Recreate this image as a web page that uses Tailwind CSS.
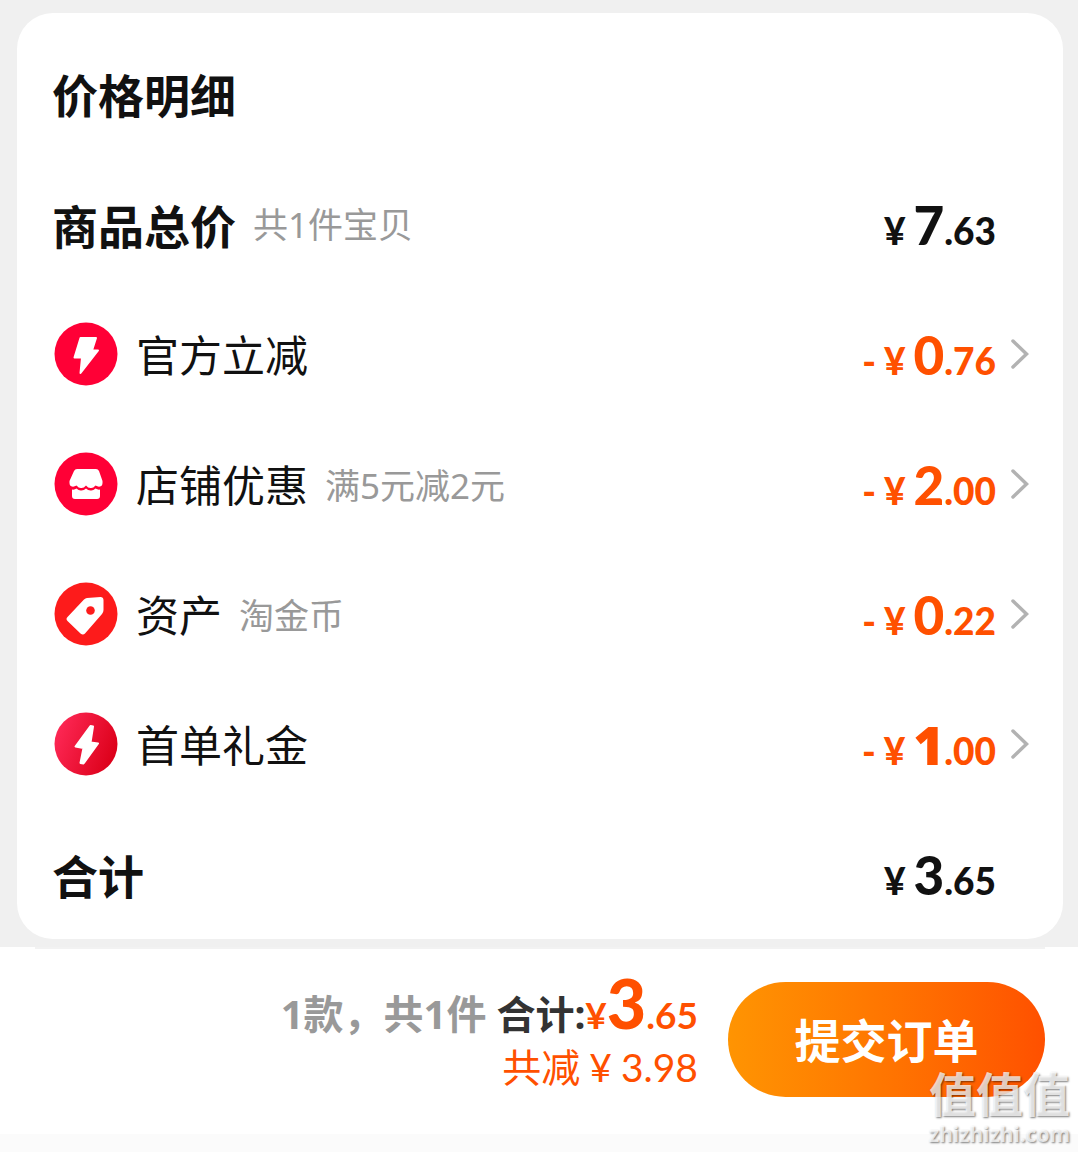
<!DOCTYPE html>
<html lang="zh-CN">
<head>
  <meta charset="UTF-8" />
  <meta name="viewport" content="width=device-width, initial-scale=1.0" />
  <title>价格明细</title>
  <script src="https://cdn.jsdelivr.net/npm/@tailwindcss/browser@4"></script>
</head>
<body class="min-h-screen flex flex-col bg-[#fbfbfb] text-[#111111] font-['Noto_Sans','Noto_Sans_CJK_SC',sans-serif]">
  <main class="bg-[#f0f0f0] pt-[13px] pb-2 pl-[17px] pr-[15px]">
    <section class="bg-white rounded-[36px] pt-4 pl-[35px] pr-[34px]">
      <h1 class="h-[130px] pt-[2px] flex items-center text-[46px] leading-[64px] font-bold">价格明细</h1>

      <div class="h-[130px] flex items-center">
        <h2 class="pt-1 text-[46px] leading-[64px] font-bold">商品总价</h2>
        <span class="ml-[17px] pt-[2px] text-[35px] leading-[64px] text-[#999999]">共1件宝贝</span>
        <p class="ml-auto mr-[33px] pt-2 flex items-baseline font-['Lato',sans-serif] font-black leading-[64px]">
          <span class="text-[37px] mr-2">¥</span><span class="text-[53px]">7</span><span class="text-[37px]">.63</span>
        </p>
      </div>

      <!-- discounts -->
      <button type="button" class="w-full h-[130px] flex items-center text-left">
        <svg class="w-[67px] h-[67px]" viewBox="0 0 67 67" aria-hidden="true">
          <circle cx="34" cy="33" r="31.5" fill="#ff0036" />
          <path d="M28.5 17 H44 L40 29.5 H46 L28.5 52 L30 36.5 H22.5 Z" fill="#fff" stroke="#fff" stroke-width="2" stroke-linejoin="round" />
        </svg>
        <span class="ml-[17px] pt-1 text-[43px] leading-[64px]">官方立减</span>
        <span class="ml-auto pt-2 flex items-baseline font-['Lato',sans-serif] font-black leading-[64px] text-[#ff5000]">
          <span class="text-[37px] mr-2">-</span><span class="text-[37px] mr-2">¥</span><span class="text-[53px]">0</span><span class="text-[37px]">.76</span>
        </span>
        <svg class="ml-[14px] w-[19px] h-8" viewBox="0 0 19 32" fill="none" stroke="#b2b2b2" stroke-width="3.5" stroke-linecap="round" aria-hidden="true"><path d="M3 3 L16.5 16 L3 29" /></svg>
      </button>

      <button type="button" class="w-full h-[130px] flex items-center text-left">
        <svg class="w-[67px] h-[67px]" viewBox="0 0 67 67" aria-hidden="true">
          <circle cx="34" cy="33" r="31.5" fill="#ff0036" />
          <path d="M25 18 H44 Q46 18 47 20 L50.5 30 Q51 35 48 35.5 Q46 36 43.5 34.5 Q41 37.5 38.5 37 Q36 37 34 34.5 Q32 37 29.5 37 Q27 37.5 24.5 34.5 Q22 36 20 35.5 Q17 35 17.5 30 L22 20 Q23 18 25 18 Z" fill="#fff" />
          <path d="M20 38.5 Q22.5 39 24.5 37.5 Q27 40 29.5 39.5 Q32 39.5 34 37.5 Q36 39.5 38.5 39.5 Q41 40 43.5 37.5 Q46 39 48 38.5 V45 Q48 48 45 48 H23 Q20 48 20 45 Z" fill="#fff" />
        </svg>
        <span class="ml-[17px] pt-1 text-[43px] leading-[64px]">店铺优惠</span>
        <span class="ml-[17px] pt-1 text-[35px] leading-[64px] text-[#999999]">满5元减2元</span>
        <span class="ml-auto pt-2 flex items-baseline font-['Lato',sans-serif] font-black leading-[64px] text-[#ff5000]">
          <span class="text-[37px] mr-2">-</span><span class="text-[37px] mr-2">¥</span><span class="text-[53px]">2</span><span class="text-[37px]">.00</span>
        </span>
        <svg class="ml-[14px] w-[19px] h-8" viewBox="0 0 19 32" fill="none" stroke="#b2b2b2" stroke-width="3.5" stroke-linecap="round" aria-hidden="true"><path d="M3 3 L16.5 16 L3 29" /></svg>
      </button>

      <button type="button" class="w-full h-[130px] flex items-center text-left">
        <svg class="w-[67px] h-[67px]" viewBox="0 0 67 67" aria-hidden="true">
          <circle cx="34" cy="33" r="31.5" fill="#fd1b1b" />
          <path d="M35 17 L48.5 16 Q51.3 16 51.5 19 V29 Q51.5 31 50 33 L33 52.5 Q31 54.5 28.5 52.5 L15.5 40 Q13.5 38 15.5 36 L32 18.5 Q33.5 17.1 35 17 Z" fill="#fff" />
          <circle cx="38.5" cy="29.5" r="4.3" fill="#fd1b1b" />
        </svg>
        <span class="ml-[17px] pt-1 text-[43px] leading-[64px]">资产</span>
        <span class="ml-[17px] pt-1 text-[35px] leading-[64px] text-[#999999]">淘金币</span>
        <span class="ml-auto pt-2 flex items-baseline font-['Lato',sans-serif] font-black leading-[64px] text-[#ff5000]">
          <span class="text-[37px] mr-2">-</span><span class="text-[37px] mr-2">¥</span><span class="text-[53px]">0</span><span class="text-[37px]">.22</span>
        </span>
        <svg class="ml-[14px] w-[19px] h-8" viewBox="0 0 19 32" fill="none" stroke="#b2b2b2" stroke-width="3.5" stroke-linecap="round" aria-hidden="true"><path d="M3 3 L16.5 16 L3 29" /></svg>
      </button>

      <button type="button" class="w-full h-[130px] flex items-center text-left">
        <svg class="w-[67px] h-[67px]" viewBox="0 0 67 67" aria-hidden="true">
          <defs>
            <linearGradient id="gift" x1="0" y1="0.2" x2="1" y2="0.6">
              <stop offset="0" stop-color="#ff2a58" />
              <stop offset="1" stop-color="#dc0019" />
            </linearGradient>
          </defs>
          <circle cx="34" cy="33" r="31.5" fill="url(#gift)" />
          <path d="M38.5 15 L41 15.5 L38.5 31.5 L46 32.5 L31.5 52.5 L28.5 52 L31.5 37 L23.5 35.5 Z" fill="#fff" stroke="#fff" stroke-width="2" stroke-linejoin="round" />
        </svg>
        <span class="ml-[17px] pt-1 text-[43px] leading-[64px]">首单礼金</span>
        <span class="ml-auto pt-2 flex items-baseline font-['Lato',sans-serif] font-black leading-[64px] text-[#ff5000]">
          <span class="text-[37px] mr-2">-</span><span class="text-[37px] mr-2">¥</span><span class="text-[53px] font-['Noto_Sans',sans-serif]">1</span><span class="text-[37px]">.00</span>
        </span>
        <svg class="ml-[14px] w-[19px] h-8" viewBox="0 0 19 32" fill="none" stroke="#b2b2b2" stroke-width="3.5" stroke-linecap="round" aria-hidden="true"><path d="M3 3 L16.5 16 L3 29" /></svg>
      </button>

      <div class="h-[130px] flex items-center">
        <h2 class="pt-1 text-[46px] leading-[64px] font-bold">合计</h2>
        <p class="ml-auto mr-[33px] pt-2 flex items-baseline font-['Lato',sans-serif] font-black leading-[64px]">
          <span class="text-[37px] mr-2">¥</span><span class="text-[53px]">3</span><span class="text-[37px]">.65</span>
        </p>
      </div>
    </section>
  </main>

  <footer class="relative bg-white">
    <div class="h-0.5 ml-[35px] mr-[33px] bg-[#f2f2f2]"></div>
    <div class="pt-[33px] pb-[37px] pr-[33px] flex items-center justify-end gap-[30px]">
      <div class="flex flex-col items-end">
        <p class="h-[52px] flex items-baseline text-[39px] leading-[52px] font-bold whitespace-nowrap">
          <span class="text-[40px] text-[#999999]">1款，共1件</span>
          <span class="ml-[10px] text-[#333333]">合计:</span>
          <span class="flex items-baseline font-['Lato',sans-serif] text-[#ff5000]"><span class="text-[37px]">¥</span><span class="text-[68px] leading-[30px] font-black">3</span><span class="text-[37px]">.65</span></span>
        </p>
        <p class="h-[52px] flex items-baseline gap-[9px] text-[39px] leading-[54px] text-[#ff5000] whitespace-nowrap">
          <span>共减</span><span class="font-['Lato',sans-serif]">¥</span><span class="font-['Lato',sans-serif]">3.98</span>
        </p>
      </div>
      <button type="button" class="w-[317px] h-[115px] rounded-full bg-linear-to-r from-[#ff9402] to-[#ff5000] text-[46px] leading-[64px] font-bold text-white">提交订单</button>
    </div>

    <!-- watermark -->
    <div class="absolute right-2 top-[120px] text-right font-bold text-white/75 text-shadow-[1px_1px_2px_rgb(0_0_0/0.5)] pointer-events-none">
      <div class="text-[47px] leading-[54px]">值值值</div>
      <div class="text-[21px] leading-[26px]">zhizhizhi.com</div>
    </div>
  </footer>
</body>
</html>
